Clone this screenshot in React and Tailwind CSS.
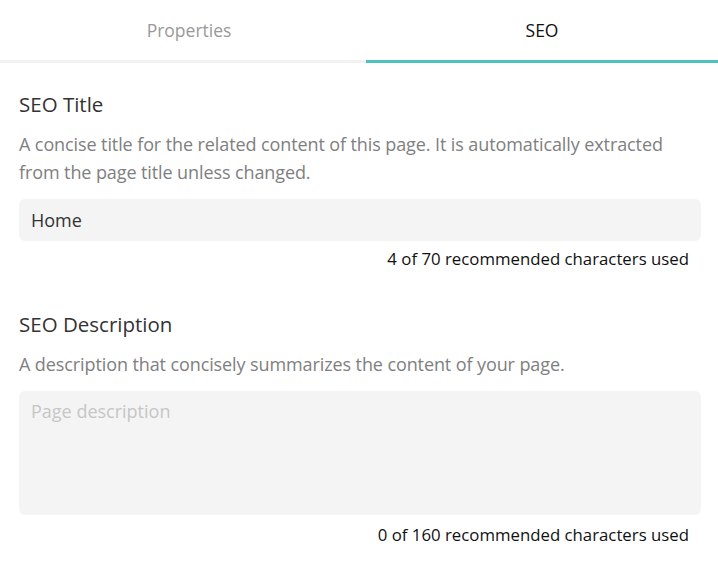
import { useState } from "react";

const FONT = "font-['Open_Sans','Noto_Sans',sans-serif]";

const Field = ({ title, help, value, onChange, placeholder, max, multiline }) => {
  return (
    <section className="flex flex-col">
      <h3 className="text-[20.5px] leading-[28px] font-medium text-[#333]">{title}</h3>
      <p className="mt-[12px] text-[18px] leading-[28px] text-[#808080] tracking-[-0.1px]">{help}</p>
      {multiline ? (
        <textarea
          value={value}
          onChange={(e) => onChange(e.target.value)}
          placeholder={placeholder}
          className="mt-[13px] h-[124px] w-full resize-none rounded-[6px] bg-[#f4f4f4] px-[12px] py-[8px] text-[18px] leading-[24px] text-[#333] placeholder:text-[#c6c6c6] outline-none"
        />
      ) : (
        <input
          value={value}
          onChange={(e) => onChange(e.target.value)}
          placeholder={placeholder}
          className="mt-[13px] h-[42px] w-full rounded-[6px] bg-[#f4f4f4] px-[12px] text-[18px] text-[#333] placeholder:text-[#c6c6c6] outline-none"
        />
      )}
      <div
        className={`${multiline ? "mt-[9px]" : "mt-[7px]"} pr-[12px] text-right text-[16.8px] leading-[22px] text-[#111]`}
      >
        {value.length} of {max} recommended characters used
      </div>
    </section>
  );
};

export default function App() {
  const [tab, setTab] = useState("SEO");
  const [title, setTitle] = useState("Home");
  const [desc, setDesc] = useState("");

  return (
    <div className={`${FONT} h-[577px] w-[718px] overflow-hidden bg-white`}>
      {/* Tabs */}
      <div className="flex h-[63px]">
        {["Properties", "SEO"].map((t) => (
          <button
            key={t}
            onClick={() => setTab(t)}
            className={`flex items-center justify-center border-b-[3px] text-[17.5px] ${
              t === "Properties" ? "w-[366px] pl-[12px]" : "flex-1"
            } ${
              tab === t
                ? "border-[#4cc3bd] font-medium text-[#111]"
                : "border-[#f2f2f2] text-[#999]"
            }`}
          >
            {t}
          </button>
        ))}
      </div>

      <div className="flex flex-col gap-[40px] px-[19px] pt-[27px] pr-[17px]">
        <Field
          title="SEO Title"
          help="A concise title for the related content of this page. It is automatically extracted from the page title unless changed."
          value={title}
          onChange={setTitle}
          max={70}
        />
        <Field
          title="SEO Description"
          help="A description that concisely summarizes the content of your page."
          value={desc}
          onChange={setDesc}
          placeholder="Page description"
          max={160}
          multiline
        />
      </div>
    </div>
  );
}
